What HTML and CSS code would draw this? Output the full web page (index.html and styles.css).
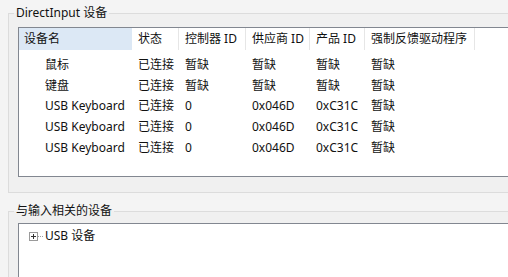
FILE: index.html
```html
<!DOCTYPE html>
<html lang="zh-CN">
<head>
<meta charset="utf-8">
<title>DirectInput 设备</title>
<link rel="stylesheet" href="styles.css">
</head>
<body>
<fieldset class="group group-top">
  <legend class="legend">DirectInput 设备</legend>
  <div class="listbox listbox-top">
    <div class="row head">
      <div class="cell first sorted">设备名</div>
      <div class="cell">状态</div>
      <div class="cell">控制器 ID</div>
      <div class="cell">供应商 ID</div>
      <div class="cell">产品 ID</div>
      <div class="cell">强制反馈驱动程序</div>
    </div>
    <div class="rows">
      <div class="row item">
        <div class="cell name">鼠标</div><div class="cell">已连接</div><div class="cell">暂缺</div><div class="cell">暂缺</div><div class="cell">暂缺</div><div class="cell">暂缺</div>
      </div>
      <div class="row item">
        <div class="cell name">键盘</div><div class="cell">已连接</div><div class="cell">暂缺</div><div class="cell">暂缺</div><div class="cell">暂缺</div><div class="cell">暂缺</div>
      </div>
      <div class="row item">
        <div class="cell name">USB Keyboard</div><div class="cell">已连接</div><div class="cell">0</div><div class="cell">0x046D</div><div class="cell">0xC31C</div><div class="cell">暂缺</div>
      </div>
      <div class="row item">
        <div class="cell name">USB Keyboard</div><div class="cell">已连接</div><div class="cell">0</div><div class="cell">0x046D</div><div class="cell">0xC31C</div><div class="cell">暂缺</div>
      </div>
      <div class="row item">
        <div class="cell name">USB Keyboard</div><div class="cell">已连接</div><div class="cell">0</div><div class="cell">0x046D</div><div class="cell">0xC31C</div><div class="cell">暂缺</div>
      </div>
    </div>
  </div>
</fieldset>
<fieldset class="group group-bottom">
  <legend class="legend">与输入相关的设备</legend>
  <div class="listbox listbox-bottom">
    <div class="tree-item">
      <span class="expander"></span><span class="dots"></span><span class="tree-label">USB 设备</span>
    </div>
  </div>
</fieldset>
</body>
</html>
```
FILE: styles.css
```css
html, body {
  margin: 0;
  padding: 0;
}
body {
  width: 508px;
  height: 277px;
  overflow: hidden;
  background: #f4f4f4;
  font-family: "Noto Sans", "Noto Sans CJK SC", sans-serif;
  font-size: 12px;
  color: #111;
}
.group {
  margin: 0 0 0 8px;
  padding: 0 0 0 5px;
  border: 1px solid #dcdcdc;
  border-right: none;
  background: #f0f0f0;
  min-width: 0;
}
.group-top {
  margin-top: 6px;
  padding-bottom: 15px;
}
.group-bottom {
  margin-top: 11px;
  border-bottom: none;
}
.legend {
  padding: 0 2px;
  line-height: 14px;
  height: 14px;
}
.listbox {
  margin-left: 4px;
  border: 1px solid #828790;
  border-right: none;
  background: #fff;
  overflow: hidden;
}
.listbox-top {
  margin-top: 7px;
  height: 148px;
}
.listbox-bottom {
  margin-top: 5px;
  height: 53px;
  border-bottom: none;
}
.row {
  display: grid;
  grid-template-columns: 113px 47px 67px 64px 55px 110px;
}
.head {
  height: 22px;
  line-height: 22px;
}
.head .cell {
  border-right: 1px solid #e6e6e6;
  padding-left: 6px;
}
.head .cell.first {
  padding-left: 5px;
}
.head .sorted {
  background: #dce8f5;
  border-right-color: #dce8f5;
}
.rows {
  padding-top: 5px;
}
.item {
  height: 20.7px;
  line-height: 20.7px;
}
.cell {
  padding-left: 6px;
  white-space: nowrap;
  overflow: hidden;
}
.item .name {
  padding-left: 26px;
}
.tree-item {
  display: flex;
  align-items: center;
  height: 18px;
  margin-top: 3px;
  padding-left: 10px;
}
.expander {
  width: 7px;
  height: 7px;
  border: 1px solid #9a9a9a;
  background: #fff;
  position: relative;
}
.expander::before {
  content: "";
  position: absolute;
  left: 1px;
  top: 3px;
  width: 5px;
  height: 1px;
  background: #333;
}
.expander::after {
  content: "";
  position: absolute;
  left: 3px;
  top: 1px;
  width: 1px;
  height: 5px;
  background: #333;
}
.dots {
  width: 5px;
  height: 0;
  border-top: 1px dotted #a0a0a0;
  margin-right: 2px;
}
.tree-label {
  line-height: 18px;
}
```
